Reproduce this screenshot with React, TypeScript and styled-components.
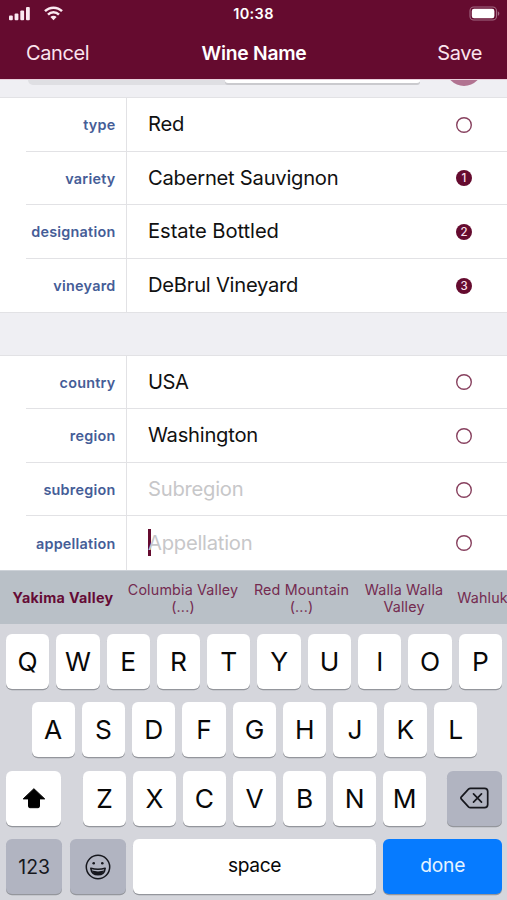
import React from "react";
import styled, { createGlobalStyle, css } from "styled-components";

const wine = "#650b2f";
const line = "#e2e2e5";

const GlobalStyle = createGlobalStyle`
  * { box-sizing: border-box; }
  body { margin: 0; }
  body, button { font-family: Inter, "Liberation Sans", sans-serif; }
  button { border: 0; padding: 0; margin: 0; background: none; }
`;

const Screen = styled.div`
  width: 507px;
  height: 900px;
  display: flex;
  flex-direction: column;
  overflow: hidden;
  background: #fff;
`;

const Header = styled.header`
  height: 79px;
  flex: none;
  background: ${wine};
  color: #fff;
`;

const StatusBar = styled.div`
  height: 27px;
  display: grid;
  grid-template-columns: 1fr auto 1fr;
  align-items: center;
  padding: 0 7px 0 8px;
`;

const Signals = styled.div`
  display: flex;
  align-items: center;
  gap: 13px;
`;

const Clock = styled.div`
  padding-right: 1px;
  font-size: 14.5px;
  font-weight: 600;
  letter-spacing: 0.35px;
`;

const BatteryIcon = styled.svg`
  justify-self: end;
`;

const NavBar = styled.nav`
  height: 50.5px;
  display: grid;
  grid-template-columns: 1fr auto 1fr;
  align-items: center;
  padding: 0 25px 0 26px;
`;

const NavTitle = styled.h1`
  margin: 0;
  padding-top: 1px;
  font-size: 19.3px;
  font-weight: 600;
  letter-spacing: -0.25px;
`;

const NavButton = styled.button<{ $end?: boolean }>`
  justify-self: ${(p) => (p.$end ? "end" : "start")};
  padding-top: 1.5px;
  color: #fbe4ee;
  font-size: 20px;
  letter-spacing: -0.4px;
`;

const ScrolledStrip = styled.div`
  height: 19px;
  flex: none;
  display: flex;
  align-items: flex-start;
  padding-left: 28px;
  background: #efeff3;
  border-top: 1px solid #ead0dc;
  border-bottom: 1px solid ${line};
`;

const Segments = styled.div`
  width: 392px;
  height: 5px;
  display: flex;
  justify-content: flex-end;
  background: #dfdfe3;
  border-radius: 0 0 9px 9px;
`;

const ActiveSegment = styled.div`
  width: 195px;
  height: 3px;
  background: #fff;
  border-radius: 0 0 8px 8px;
  box-shadow: 0 2px 0 #cacace;
`;

const RoundEdge = styled.svg`
  margin-left: 28px;
`;

const Group = styled.section`
  flex: none;
  height: 214.4px;
  display: grid;
  grid-template-rows: repeat(4, 1fr);
`;

const GroupGap = styled.div`
  height: 43.2px;
  flex: none;
  background: #efeff3;
  border-top: 1px solid ${line};
  border-bottom: 1px solid ${line};
`;

const Row = styled.div`
  display: grid;
  grid-template-columns: 101px 1fr 51px;
  padding-left: 26px;
  background: linear-gradient(${line}, ${line}) 26px 100% / 100% 1px no-repeat;

  &:last-child { background: none; }
`;

const Label = styled.label`
  display: flex;
  align-items: center;
  justify-content: flex-end;
  padding-right: 10.5px;
  border-right: 1px solid ${line};
  color: #455d97;
  font-size: 14.4px;
  font-weight: 600;
  letter-spacing: 0.24px;
`;

const Value = styled.div<{ $placeholder: boolean; $tracking?: number }>`
  display: flex;
  align-items: center;
  padding: 0 0 2px 21px;
  color: ${(p) => (p.$placeholder ? "#c7c7c9" : "#111")};
  font-size: 20.2px;
  letter-spacing: ${(p) => p.$tracking ?? -0.25}px;
  white-space: nowrap;
`;

const Caret = styled.span`
  width: 2.5px;
  height: 27px;
  margin-right: -2.5px;
  background: ${wine};
`;

const EmptyMarker = styled.svg`
  align-self: center;
`;

const RankMarker = styled.span`
  width: 16px;
  height: 16px;
  align-self: center;
  display: grid;
  place-items: center;
  border-radius: 50%;
  background: ${wine};
  color: #f8dfe9;
  font-size: 11.5px;
  font-weight: 500;
  line-height: 16px;
`;

const Suggestions = styled.div`
  height: 54.5px;
  flex: none;
  display: flex;
  align-items: center;
  background: #b9c0c7;
  border-top: 1px solid #cdd2d8;
  overflow: hidden;
`;

const Suggestion = styled.button<{ $width: number; $best?: boolean }>`
  flex: none;
  width: ${(p) => p.$width}px;
  color: ${(p) => (p.$best ? "#650b35" : "#742b50")};
  font-size: 14.3px;
  font-weight: ${(p) => (p.$best ? 700 : 400)};
  letter-spacing: ${(p) => (p.$best ? 0.3 : 0.17)}px;
  line-height: 17px;
  text-align: center;
  white-space: pre;
`;

const Keyboard = styled.div`
  flex: 1;
  display: flex;
  flex-direction: column;
  gap: 13.4px;
  padding: 9.5px 5px 0 6px;
  background: #d5d6dc;
`;

const KeyRow = styled.div<{ $inset?: boolean }>`
  height: 55px;
  display: flex;
  justify-content: space-between;
  padding: ${(p) => (p.$inset ? "0 24.5px 0 25.5px" : "0")};
`;

const Letters = styled.div`
  width: 343.5px;
  margin-left: 1px;
  display: flex;
  justify-content: space-between;
`;

const tones = {
  light: css`background: #fff; color: #080808;`,
  dark: css`background: #b1b4c1; color: #16171d;`,
  blue: css`background: #067bff; color: #e4f3ff;`,
};

const Key = styled.button<{ $width?: number; $size?: number; $tone?: keyof typeof tones }>`
  width: ${(p) => p.$width ?? 43.3}px;
  height: 55px;
  display: flex;
  align-items: center;
  justify-content: center;
  border-radius: 6px;
  box-shadow: 0 1.2px 0 #94969c;
  font-size: ${(p) => p.$size ?? 26.3}px;
  ${(p) => tones[p.$tone ?? "light"]}
`;

const KeyText = styled.span<{ $lift?: number; $tracking?: number }>`
  padding-bottom: ${(p) => p.$lift ?? 0}px;
  letter-spacing: ${(p) => p.$tracking ?? 0}px;
`;

interface Field {
  label: string;
  value?: string;
  hint?: string;
  rank?: number;
  focused?: boolean;
  tracking?: number;
}

const wineFields: Field[] = [
  { label: "type", value: "Red" },
  { label: "variety", value: "Cabernet Sauvignon", rank: 1 },
  { label: "designation", value: "Estate Bottled", rank: 2, tracking: -0.06 },
  { label: "vineyard", value: "DeBrul Vineyard", rank: 3 },
];

const placeFields: Field[] = [
  { label: "country", value: "USA", tracking: -0.5 },
  { label: "region", value: "Washington" },
  { label: "subregion", hint: "Subregion" },
  { label: "appellation", hint: "Appellation", focused: true },
];

const suggestions = [
  { text: "Yakima Valley", width: 126, best: true },
  { text: "Columbia Valley\n(...)", width: 114 },
  { text: "Red Mountain\n(...)", width: 123 },
  { text: "Walla Walla\nValley", width: 82 },
  { text: "Wahluk", width: 75 },
];

const Marker = ({ rank }: { rank?: number }) =>
  rank ? (
    <RankMarker>{rank}</RankMarker>
  ) : (
    <EmptyMarker width="16" height="16" viewBox="0 0 16 16">
      <circle cx="8" cy="8" r="7.3" fill="#fff" stroke="#87405e" strokeWidth="1.4" />
    </EmptyMarker>
  );

const FieldGroup = ({ fields }: { fields: Field[] }) => (
  <Group>
    {fields.map((f) => (
      <Row key={f.label}>
        <Label>{f.label}</Label>
        <Value $placeholder={!f.value} $tracking={f.tracking}>
          {f.focused && <Caret />}
          {f.value ?? f.hint}
        </Value>
        <Marker rank={f.rank} />
      </Row>
    ))}
  </Group>
);

const letterKeys = (letters: string) => letters.split("").map((c) => <Key key={c}>{c}</Key>);

export default function App() {
  return (
    <Screen>
      <GlobalStyle />
      <Header>
        <StatusBar>
          <Signals>
            <svg width="23" height="15" viewBox="0 0 23 15" fill="#fbe9f1">
              <rect x="1" y="9.6" width="3.8" height="4.6" rx="1" />
              <rect x="6.6" y="7.4" width="3.8" height="6.8" rx="1" />
              <rect x="12.3" y="4.4" width="3.8" height="9.8" rx="1" />
              <rect x="18" y="1" width="3.8" height="13.2" rx="1" />
            </svg>
            <svg width="19" height="15" viewBox="0 0 19 15" fill="none" stroke="#fbe9f1" strokeWidth="2.5">
              <path d="M1 5.2a12.1 12.1 0 0 1 17 0" />
              <path d="M4 8.6a7.8 7.8 0 0 1 11 0" />
              <path d="M9.5 14.2L6.4 11.1a4.4 4.4 0 0 1 6.2 0Z" fill="#fbe9f1" stroke="none" />
            </svg>
          </Signals>
          <Clock>10:38</Clock>
          <BatteryIcon width="31" height="15" viewBox="0 0 31 15">
            <rect x="1" y="1" width="26.5" height="13" rx="3.8" fill="none" stroke="#a26a83" strokeWidth="1.1" />
            <rect x="2.8" y="2.8" width="22.6" height="9.4" rx="2.2" fill="#fff" />
            <path d="M28.8 5.2c2 .8 2 3.8 0 4.6Z" fill="#a26a83" />
          </BatteryIcon>
        </StatusBar>
        <NavBar>
          <NavButton>Cancel</NavButton>
          <NavTitle>Wine Name</NavTitle>
          <NavButton $end>Save</NavButton>
        </NavBar>
      </Header>
      <ScrolledStrip>
        <Segments>
          <ActiveSegment />
        </Segments>
        <RoundEdge width="32" height="7" viewBox="0 0 32 7">
          <circle cx="16" cy="-12.5" r="18.5" fill="#b17391" />
        </RoundEdge>
      </ScrolledStrip>
      <FieldGroup fields={wineFields} />
      <GroupGap />
      <FieldGroup fields={placeFields} />
      <Suggestions>
        {suggestions.map((s) => (
          <Suggestion key={s.text} $width={s.width} $best={s.best}>
            {s.text}
          </Suggestion>
        ))}
      </Suggestions>
      <Keyboard>
        <KeyRow>{letterKeys("QWERTYUIOP")}</KeyRow>
        <KeyRow $inset>{letterKeys("ASDFGHJKL")}</KeyRow>
        <KeyRow>
          <Key $width={55} aria-label="shift">
            <svg width="25" height="22" viewBox="0 0 25 22">
              <path d="M12.9 1.7L23.7 11.9h-5.2v7.4q0 1.4-1.4 1.4H8.9Q7.5 20.7 7.5 19.3V11.9H2.2Z" fill="#000" stroke="#000" strokeWidth="1" strokeLinejoin="round" />
            </svg>
          </Key>
          <Letters>{letterKeys("ZXCVBNM")}</Letters>
          <Key $width={55} $tone="dark" aria-label="delete">
            <svg width="29" height="22" viewBox="0 0 29 22" fill="none" stroke="#16171d" strokeWidth="1.7" strokeLinecap="round" strokeLinejoin="round">
              <path d="M10.5 1.4H24.5q3.2 0 3.2 3.2V17.4q0 3.2-3.2 3.2H10.5q-1.2 0-2-.8L1.4 12.2q-1-1.2 0-2.4L8.5 2.2q.8-.8 2-.8Z" />
              <path d="M13.5 6.900l8 8.200m0-8.200l-8 8.200" />
            </svg>
          </Key>
        </KeyRow>
        <KeyRow>
          <Key $width={56.4} $size={19.4} $tone="dark">
            <KeyText>123</KeyText>
          </Key>
          <Key $width={56} $tone="dark" aria-label="emoji">
            <svg width="26" height="26" viewBox="0 0 26 26" fill="none" stroke="#16171d" strokeWidth="1.5">
              <circle cx="13" cy="13" r="11.7" />
              <circle cx="8.7" cy="9.3" r="1.3" fill="#16171d" stroke="none" />
              <circle cx="17.3" cy="9.3" r="1.3" fill="#16171d" stroke="none" />
              <path d="M5.8 14.3q7.2 2 14.4 0-.8 6.500-7.200 6.500t-7.200-6.500Z" strokeLinejoin="round" />
              <path d="M6.8 16.600q6.200 1.600 12.400 0-1.600 4.200-6.200 4.200t-6.200-4.200Z" fill="#16171d" stroke="none" />
            </svg>
          </Key>
          <Key $width={243} $size={19.2}>
            <KeyText $lift={3} $tracking={-0.4}>space</KeyText>
          </Key>
          <Key $width={118.5} $size={19.2} $tone="blue">
            <KeyText $lift={3} $tracking={-0.2}>done</KeyText>
          </Key>
        </KeyRow>
      </Keyboard>
    </Screen>
  );
}
